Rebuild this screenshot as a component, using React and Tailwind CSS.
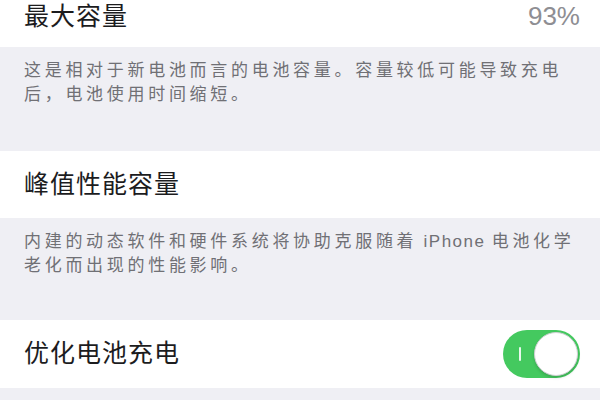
import React from "react";

const font = { fontFamily: '"Liberation Sans", "Noto Sans CJK SC", sans-serif' };

function Toggle() {
  return (
    <div className="relative w-[77px] h-[48px] rounded-full bg-[#44c95f] flex items-center justify-end pr-[2px]">
      <span className="absolute left-[16px] top-[17px] w-[2px] h-[14px] bg-[#e8f8ec] rounded-sm" />
      <span className="w-[44px] h-[44px] rounded-full bg-white border border-[#d0d0d4] shadow-[0_2px_3px_rgba(0,0,0,0.15)]" />
    </div>
  );
}

function Footer({ children }) {
  return (
    <div className="px-6 pt-[12px] text-[17px] leading-[24px] tracking-[3.7px] text-[#707075]">
      {children}
    </div>
  );
}

export default function App() {
  return (
    <div className="w-[600px] h-[400px] overflow-hidden bg-[#efeff4]" style={font}>
      {/* cropped first row */}
      <div className="h-[47px] bg-white flex items-start justify-between pl-6 pr-5">
        <span className="text-[25px] leading-[32px] tracking-[1px] text-[#1c1c1e]">最大容量</span>
        <span className="text-[26px] leading-[32px] text-[#8e8e93]">93%</span>
      </div>
      <div className="h-[104px]">
        <Footer>
          这是相对于新电池而言的电池容量。容量较低可能导致充电
          <br />
          后，电池使用时间缩短。
        </Footer>
      </div>

      <div className="h-[67px] bg-white flex items-center pl-6 pr-5">
        <span className="text-[25px] tracking-[1px] text-[#1c1c1e]">峰值性能容量</span>
      </div>
      <div className="h-[102px]">
        <Footer>
          内建的动态软件和硬件系统将协助克服随着
          <span className="tracking-[1.5px]"> iPhone </span>
          电池化学
          <br />
          老化而出现的性能影响。
        </Footer>
      </div>

      <div className="h-[68px] bg-white flex items-center justify-between pl-6 pr-5">
        <span className="text-[25px] tracking-[1px] text-[#1c1c1e]">优化电池充电</span>
        <Toggle />
      </div>
    </div>
  );
}
